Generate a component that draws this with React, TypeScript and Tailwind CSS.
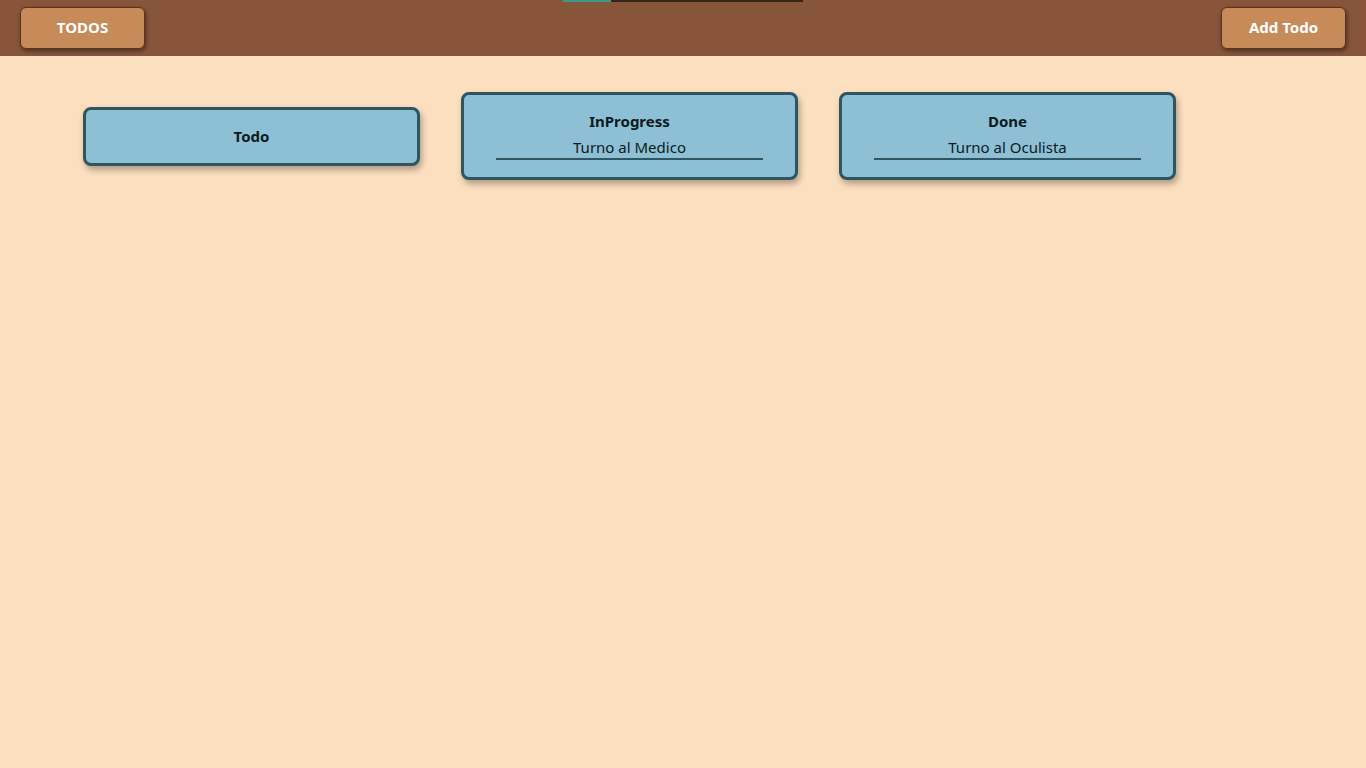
import React from "react";

const columns = [
  { title: "Todo", items: [] as string[] },
  { title: "InProgress", items: ["Turno al Medico"] },
  { title: "Done", items: ["Turno al Oculista"] },
];

export default function App() {
  return (
    <div
      className="min-h-screen bg-[#fcdfbf]"
      style={{ fontFamily: '"Noto Sans", "Open Sans", sans-serif' }}
    >
      {/* Header */}
      <header className="h-14 bg-[#87553a] flex justify-between items-center px-5">
        <button className="w-[125px] h-[42px] mb-[1px] bg-[#c68b59] border border-[#5e3219] rounded-md text-white font-bold text-[15px] shadow-[1px_2px_4px_rgba(0,0,0,0.45)]">
          TODOS
        </button>
        <div className="self-start w-[240px] h-[2px] bg-[#3a2418] flex">
          <div className="w-[48px] h-full bg-[#3a9a8a]" />
        </div>
        <button className="w-[125px] h-[42px] mb-[1px] bg-[#c68b59] border border-[#5e3219] rounded-md text-white font-bold text-[15px] shadow-[1px_2px_4px_rgba(0,0,0,0.45)]">
          Add Todo
        </button>
      </header>

      {/* Board */}
      <main className="flex items-center gap-[41px] pl-[83px] pt-[36px]">
        {columns.map((col) => (
          <div
            key={col.title}
            className="w-[337px] bg-[#8dc0d5] border-[3px] border-[#2f5560] rounded-lg px-8 pt-4 pb-[17px] text-center text-[#0c1a20] shadow-[2px_4px_6px_rgba(0,0,0,0.3)]"
          >
            <h2 className="font-bold text-[15px] leading-5">{col.title}</h2>
            {col.items.map((item) => (
              <div
                key={item}
                className="mt-[5px] text-[15px] leading-[22px] border-b-2 border-[#2f5560]"
              >
                {item}
              </div>
            ))}
          </div>
        ))}
      </main>
    </div>
  );
}
